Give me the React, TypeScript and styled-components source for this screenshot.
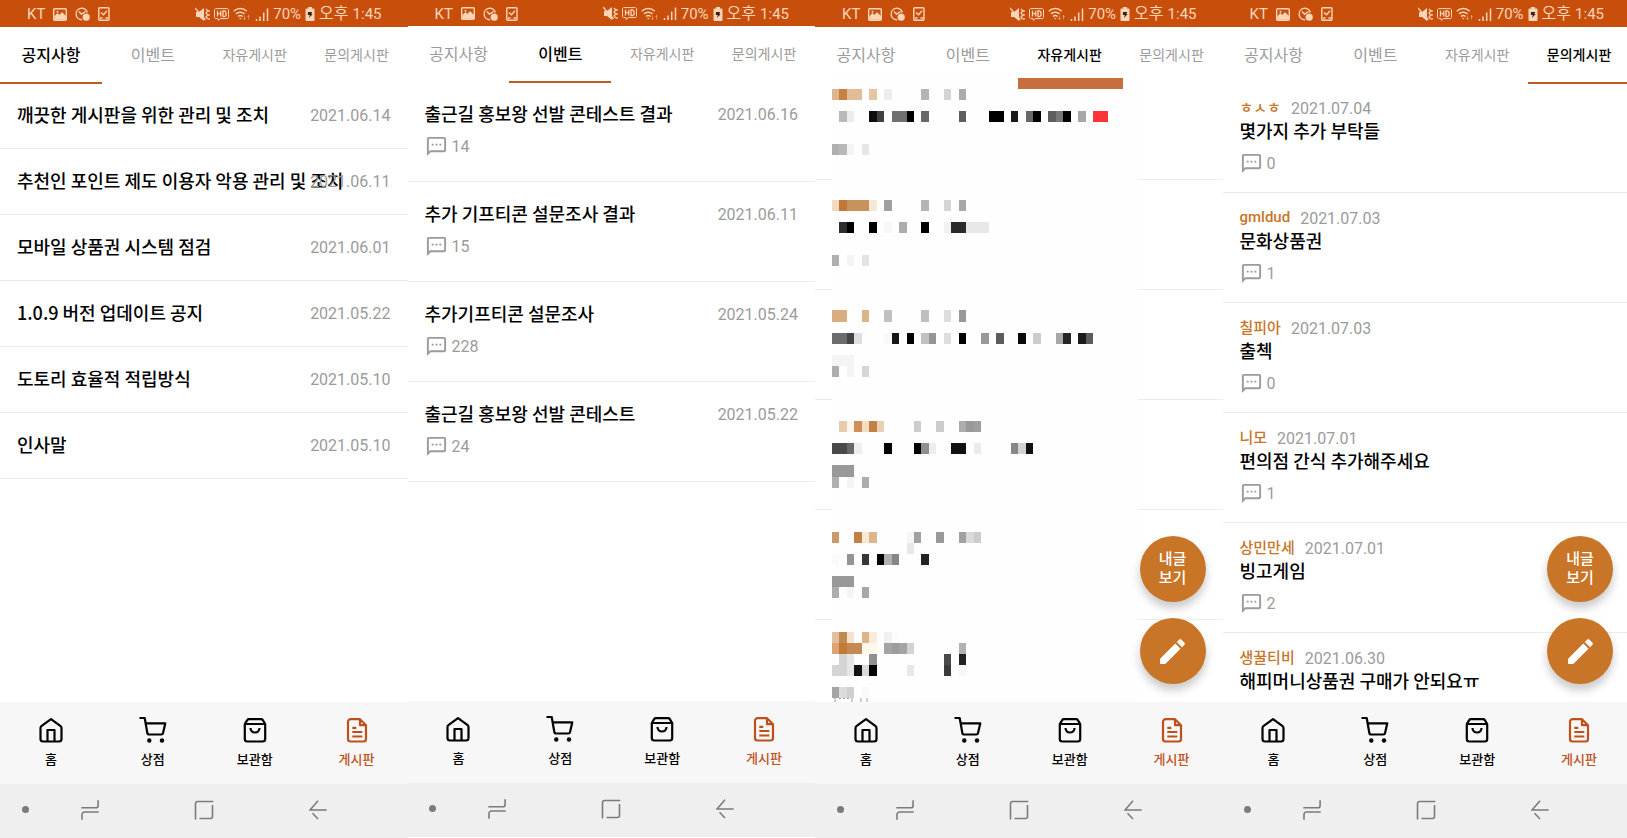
import React from "react";
import styled, { createGlobalStyle } from "styled-components";
import { MdEdit, MdOutlineSms } from "react-icons/md";

const GlobalStyle = createGlobalStyle`
  * { box-sizing: border-box; }
  html, body { margin: 0; padding: 0; background: #fff; overflow: hidden; }
  body { font-family: Roboto, "Noto Sans CJK KR", sans-serif; color: #000; }
  button { font: inherit; border: 0; background: none; padding: 0; margin: 0; cursor: pointer; }
  ul { list-style: none; margin: 0; padding: 0; }
  svg { display: block; flex: none; }
`;

const accent = "#c84e0b";
const ochre = "#c87528";
const grey = "#9b9b9b";

/* ---------- layout ---------- */

const Board = styled.main`
  display: grid;
  grid-template-columns: repeat(4, minmax(0, 1fr));
  width: calc(100% + 3px);
  height: 100vh;
`;

const Phone = styled.section<{ $raised?: boolean }>`
  position: relative;
  display: flex;
  flex-direction: column;
  min-height: 0;
  padding-bottom: ${(p) => (p.$raised ? 1 : 0)}px;
  background: #fff;
`;

const StatusBar = styled.header<{ $raised?: boolean }>`
  flex: none;
  display: flex;
  align-items: center;
  justify-content: space-between;
  height: ${(p) => (p.$raised ? 26 : 27)}px;
  padding: 1px 26px 0 27px;
  background: ${accent};
  color: #fcd5b8;
  font-size: 15px;
  line-height: 24px;
  white-space: nowrap;
`;

const StatusGroup = styled.div<{ $gap: number }>`
  display: flex;
  align-items: center;
  gap: ${(p) => p.$gap}px;
`;

const Meridiem = styled.span`
  font-size: 16px;
`;

const Tabs = styled.div`
  flex: none;
  display: grid;
  grid-template-columns: repeat(4, minmax(0, 1fr));
  height: 57px;
  margin-bottom: -1px;
`;

const Tab = styled.button<{ $active: boolean; $small?: boolean }>`
  display: flex;
  align-items: center;
  justify-content: center;
  padding-bottom: 2px;
  border-bottom: 2px solid ${(p) => (p.$active ? "#bf5a24" : "transparent")};
  color: ${(p) => (p.$active ? "#000" : grey)};
  font-size: ${(p) => (p.$small ? 14 : 16)}px;
  font-weight: ${(p) => (p.$active ? 500 : 400)};
  white-space: nowrap;
`;

const Body = styled.div`
  position: relative;
  flex: 1;
  min-height: 0;
  overflow: hidden;
`;

const NoticeRow = styled.li`
  display: flex;
  align-items: center;
  justify-content: space-between;
  height: 66px;
  padding: 0 17px;
  border-bottom: 1px solid #ececec;
`;

const EventRow = styled.li`
  display: flex;
  flex-direction: column;
  gap: 6px;
  height: 100px;
  padding: 19px 17px 0;
  border-bottom: 1px solid #ececec;
`;

const EventHead = styled.div`
  display: flex;
  align-items: center;
  justify-content: space-between;
`;

const PostRow = styled.li`
  height: 110px;
  padding: 16px 17px 0;
  border-bottom: 1px solid #ececec;
`;

const ScrolledList = styled.ul`
  margin-top: -13px;
`;

const Title = styled.span`
  flex: 1;
  min-width: 0;
  display: block;
  padding-bottom: 3px;
  font-family: "Noto Sans CJK KR", sans-serif;
  font-size: 18px;
  font-weight: 500;
  line-height: 24px;
  white-space: nowrap;
`;

const DateText = styled.time`
  position: relative;
  color: ${grey};
  font-size: 16px;
  line-height: 24px;
`;

const Byline = styled.div`
  display: flex;
  align-items: center;
  gap: 10px;
  height: 19px;
`;

const Author = styled.span`
  padding-bottom: 4px;
  color: ${ochre};
  font-size: 15px;
  font-weight: 500;
`;

const CommentLine = styled.div<{ $spaced?: boolean }>`
  display: flex;
  align-items: center;
  gap: 4px;
  height: 24px;
  margin-top: ${(p) => (p.$spaced ? 6 : 0)}px;
  color: ${grey};
  font-size: 16px;
`;

const FabStack = styled.div`
  position: absolute;
  z-index: 1;
  right: 17px;
  bottom: 18px;
  display: flex;
  flex-direction: column;
  gap: 16px;
`;

const Fab = styled.button`
  display: flex;
  align-items: center;
  justify-content: center;
  width: 66px;
  height: 66px;
  border-radius: 50%;
  background: ${ochre};
  color: #fff;
  font-size: 15px;
  font-weight: 500;
  line-height: 19px;
  box-shadow: 0 6px 10px rgba(0, 0, 0, 0.22);
`;

const BottomNav = styled.nav`
  position: relative;
  flex: none;
  display: grid;
  grid-template-columns: repeat(4, minmax(0, 1fr));
  height: 82px;
  background: #f7f7f7;
`;

const NavItem = styled.button<{ $active?: boolean }>`
  display: flex;
  flex-direction: column;
  align-items: center;
  gap: 6px;
  padding-top: 14px;
  color: ${(p) => (p.$active ? "#c0501b" : "#000")};
  font-size: 13px;
  font-weight: 500;
  line-height: 20px;
`;

const SystemBar = styled.footer`
  flex: none;
  display: grid;
  grid-template-columns: 8% repeat(3, 28%);
  align-items: center;
  height: 54px;
  padding-bottom: 3px;
  background: #efefef;
  color: #7b7b7b;
`;

const SystemKey = styled.button`
  display: flex;
  justify-content: center;
  color: inherit;
`;

const Dot = styled.span`
  justify-self: end;
  width: 7px;
  height: 7px;
  margin-right: 4px;
  border-radius: 50%;
  background: currentColor;
`;

const Mosaic = styled.svg`
  position: absolute;
  top: 78px;
  left: 17px;
  width: 75%;
  height: 624px;
`;

/* ---------- status icons ---------- */

const PictureIcon = () => (
  <svg width="14" height="13" viewBox="0 0 14 13" fill="none" stroke="currentColor" strokeWidth="1.4">
    <rect x=".7" y=".7" width="12.6" height="11.6" rx="1" />
    <path d="M2 11V8.500L4.500 6l2 2L9 5l3.500 3.500V11z" fill="currentColor" />
    <circle cx="4.500" cy="3.800" r="1" fill="currentColor" stroke="none" />
  </svg>
);

const ClockIcon = () => (
  <svg width="15" height="14" viewBox="0 0 15 14" fill="none" stroke="currentColor" strokeWidth="1.4">
    <path d="M12.3 5.5A5.7 5.7 0 1 0 7 12.7" />
    <path d="M3.8 4.5 6.5 7l4-2.5" />
    <circle cx="11.2" cy="10.2" r="3.6" fill="currentColor" stroke="none" />
  </svg>
);

const CheckDocIcon = () => (
  <svg width="12" height="14" viewBox="0 0 12 14" fill="none" stroke="currentColor" strokeWidth="1.4">
    <rect x=".8" y=".8" width="10.2" height="12.4" rx="1" />
    <path d="m3 5.500 2.500 2.300L9 3.800" />
    <path d="M2 11h2.500M7.500 11H10" />
  </svg>
);

const MuteIcon = () => (
  <svg width="15" height="15" viewBox="0 0 15 15" fill="none" stroke="currentColor">
    <path d="M1 5h3l5-4v13L4 10H1z" fill="currentColor" stroke="none" />
    <path d="m0 1 10.5 12" strokeWidth="1.3" />
    <path d="m11 2 1.8 2L11 6l1.8 2L11 10l1.8 2M14 3v2M14 7v2M14 11v2" strokeWidth="1.2" />
  </svg>
);

const HdIcon = () => (
  <svg width="15" height="13" viewBox="0 0 15 13" fill="none" stroke="currentColor" strokeWidth="1">
    <path d="M1.500 .6h12l1 1v8l-1 1H6L4.500 12.500 4 10.600H1.500l-1-1v-8z" />
    <path d="M3.500 2.800v5.800M6.800 2.800v5.800M3.500 5.600h3.300M9 2.800v5.800h1.700L12 7.200V4.200l-1.300-1.400z" strokeWidth="1.300" />
  </svg>
);

const WifiIcon = () => (
  <svg width="18" height="14" viewBox="0 0 18 14" fill="none" stroke="currentColor" strokeWidth="1.5">
    <path d="M.8 4.200a9.200 9.200 0 0 1 12.900 0M3 6.900a6.200 6.200 0 0 1 8.500 0M5 9.500a3.500 3.500 0 0 1 4.500 0" />
    <path d="M6 11h2.600L7.300 12.500z" fill="currentColor" stroke="none" />
    <path d="M11.500 8.500v4M10.300 11.300l1.200 1.200 1.200-1.200M15.500 12.500v-4M14.300 9.700l1.200-1.200 1.200 1.200" strokeWidth=".8" opacity=".6" />
  </svg>
);

const SignalIcon = () => (
  <svg width="14" height="13" viewBox="0 0 14 13" fill="none" stroke="currentColor" strokeWidth="1.500">
    <path d="M1.500 11v2M5 8.500V13M8.700 4.500V13M12.500 .5V13" />
  </svg>
);

const BatteryIcon = () => (
  <svg width="10" height="14" viewBox="0 0 10 14" fill="currentColor">
    <path d="M3 0h4v1.500h1.500a1 1 0 0 1 1 1V13a1 1 0 0 1-1 1h-7a1 1 0 0 1-1-1V2.500a1 1 0 0 1 1-1H3z" />
    <path d="M3 5h4.200L6.300 7h1.400L4 11l.8-3H2.800z" fill="#3a2010" />
  </svg>
);

/* ---------- navigation icons ---------- */

const NavSvg = styled.svg.attrs({ width: 28, height: 28, viewBox: "0 0 28 28" })`
  fill: none;
  stroke: currentColor;
  stroke-width: 2.2;
  stroke-linejoin: round;
`;

const HomeIcon = () => (
  <NavSvg>
    <path d="M14 3.200 23.300 9.800a2.800 2.800 0 0 1 1.200 2.200v11a2.500 2.500 0 0 1-2.500 2.500H6A2.500 2.500 0 0 1 3.500 23V12a2.800 2.800 0 0 1 1.200-2.200z" />
    <path d="M10.500 25.500V14h7v11.500" />
  </NavSvg>
);

const CartIcon = () => (
  <NavSvg>
    <path d="M.5 2h5.200l2.600 14.800a2 2 0 0 0 2 1.700h11.800a2 2 0 0 0 2-1.700L26.300 7.300H6.600" />
    <circle cx="10.300" cy="24.500" r="2.200" fill="currentColor" stroke="none" />
    <circle cx="23" cy="24.500" r="2.200" fill="currentColor" stroke="none" />
  </NavSvg>
);

const BagIcon = () => (
  <NavSvg>
    <path d="m3.800 8 2.400-3.900a2 2 0 0 1 1.700-.9h12.200a2 2 0 0 1 1.700.9L24.200 8v15a2.500 2.500 0 0 1-2.500 2.500H6.300A2.500 2.500 0 0 1 3.800 23zM3.800 8h20.400" />
    <path d="M9.500 12c0 6 9 6 9 0" />
  </NavSvg>
);

const BoardIcon = () => (
  <NavSvg>
    <path d="M17 3.200H7.500A2.500 2.500 0 0 0 5 5.700V23a2.500 2.500 0 0 0 2.500 2.500h13A2.500 2.500 0 0 0 23 23V9.200zV9.200h6" />
    <path d="M9.300 11.800h4M9.300 16h10M9.300 20.500h10" />
  </NavSvg>
);

const RecentsIcon = () => (
  <svg width="18" height="20" viewBox="0 0 18 20" fill="none" stroke="currentColor" strokeWidth="1.600">
    <path d="M.3 7.800h14.400a2.400 2.400 0 0 0 2.400-2.400V.3M1 19.700v-5.300A2.400 2.400 0 0 1 3.400 12h14.300" />
  </svg>
);

const HomeKeyIcon = () => (
  <svg width="20" height="20" viewBox="0 0 20 20" fill="none" stroke="currentColor" strokeWidth="1.600">
    <path d="M1.500 19.500V3.500a2 2 0 0 1 2-2h15.800M18.500 5v11.500a2 2 0 0 1-2 2H5.500" />
  </svg>
);

const BackIcon = () => (
  <svg width="18" height="20" viewBox="0 0 18 20" fill="none" stroke="currentColor" strokeWidth="1.600">
    <path d="M17.700 10H1L9 .8M3.500 13.200 9 19" />
  </svg>
);

/* ---------- data ---------- */

const tabNames = ["공지사항", "이벤트", "자유게시판", "문의게시판"];

const notices = [
  ["깨끗한 게시판을 위한 관리 및 조치", "2021.06.14"],
  ["추천인 포인트 제도 이용자 악용 관리 및 조치", "2021.06.11"],
  ["모바일 상품권 시스템 점검", "2021.06.01"],
  ["1.0.9 버전 업데이트 공지", "2021.05.22"],
  ["도토리 효율적 적립방식", "2021.05.10"],
  ["인사말", "2021.05.10"],
];

const events: [string, string, number][] = [
  ["출근길 홍보왕 선발 콘테스트 결과", "2021.06.16", 14],
  ["추가 기프티콘 설문조사 결과", "2021.06.11", 15],
  ["추가기프티콘 설문조사", "2021.05.24", 228],
  ["출근길 홍보왕 선발 콘테스트", "2021.05.22", 24],
];

const posts: [string, string, string, number?][] = [
  ["ㅎㅅㅎ", "2021.07.04", "몇가지 추가 부탁들", 0],
  ["gmldud", "2021.07.03", "문화상품권", 1],
  ["칠피아", "2021.07.03", "출첵", 0],
  ["니모", "2021.07.01", "편의점 간식 추가해주세요", 1],
  ["상민만세", "2021.07.01", "빙고게임", 2],
  ["생꿀티비", "2021.06.30", "해피머니상품권 구매가 안되요ㅠ"],
];

/* Each line of the censored feed: row number, then "column[+extra cells]:colour". */
const mosaicRows: [number, string][] = [
  [0, "25+13:c66e3e"],
  [1, "0:dfb58f 1:c8813f 2+1:e0bc98 5:e4c5a4 7:ededed 12:b4b4b4 15:d4d4d4 17:ababab"],
  [3, "1:b9b9b9 2:ececec 5:0d0d0d 6:404040 8+1:707070 10:000000 12:686868 17:5e5e5e 21+1:000000 24:1a1a1a 26:686868 27:000000 29:5e5e5e 30:777777 31:000000 33:a8a8a8 35+1:ff3438"],
  [6, "0:afafaf 1:b9b9b9 2:f4f4f4 4:e6e6e6"],
  [11, "0:f3d9bd 1:bf7837 2+2:c8925c 5:f5e6d6 7:a0a0a0 12:b4b4b4 15:d4d4d4 17:a8a8a8"],
  [13, "1:2d2d2d 2:000000 5:000000 7:f7f7f7 9:adadad 12:000000 15:f1f1f1 16+1:2b2b2b 18+2:e8e8e8"],
  [16, "0:afafaf 2:f4f4f4 4:e3e3e3"],
  [21, "0+1:d8ae80 4:dcb48a 7:c0c0c0 12:bfbfbf 15:dedede 17:999999"],
  [23, "0+1:6c6c6c 2:444444 3:dedede 7:f9f9f9 8:171717 10:000000 12:c0c0c0 13:959595 15:dedede 17:000000 20:999999 22:5c5c5c 25:0a0a0a 27:cccccc 30:a8a8a8 31:262626 33:1b1b1b 34:5c5c5c"],
  [25, "0+2:f4f4f4"],
  [26, "0:adadad 2:f4f4f4 4:d6d6d6"],
  [31, "1:e8cbad 2:fff5e8 3:cd8f55 4:f4dcc2 5:c08145 6:ebd0b3 11:cccccc 14:cccccc 17:acacac 18:999999 19:9e9e9e"],
  [33, "0+1:494949 2:686868 3:eeeeee 7:000000 11:000000 12:8f8f8f 13:ededed 16+1:111111 19:ebebeb 24:868686 25:d2d2d2 26:111111"],
  [35, "0+2:999999"],
  [36, "0:b0b0b0 2:f4f4f4 4:adadad"],
  [41, "0:cc9a69 3:c08145 4:fae8d3 5:dcb48d 10:f5f5f5 11:a0a0a0 14:999999 17:a0a0a0 18:dadada 19:cccccc"],
  [42, "10:e8e8e8"],
  [43, "0:fafafa 2:949494 4:363636 6:000000 7:b0b0b0 8:868686 12:222222"],
  [45, "0+2:999999"],
  [46, "0:adadad 2:f4f4f4 4:a8a8a8"],
  [50, "0:e0c09c 1:c08a50 2:f5e3ce 4:dfb488 5:fbecda 7:f1f1f1 8:fbfbfb"],
  [51, "0:daa474 1:c17a38 2+1:c38a51 4+1:fff8ea 7:a4a4a4 8:9c9c9c 9:a4a4a4 10:d2d2d2 17:b2b2b2"],
  [52, "1:d4d4d4 2:e6e6e6 5:909090 15:4a4a4a 17:222222"],
  [53, "0+1:d4d4d4 2:e6e6e6 3:111111 4:dadada 5:000000 10:e8e8e8 15:3b3b3b 17:f7f7f7"],
  [55, "0:a4a4a4 1:dcdcdc 2:d0d0d0 4:f9f9f9"],
];

const cellWidth = 7.457;
const cellHeight = 11.07;

const mosaicCells = mosaicRows.flatMap(([row, line]) =>
  line.split(" ").map((item) => {
    const [place, colour] = item.split(":");
    const [column, extra] = place.split("+").map(Number);
    const x = Math.round(column * cellWidth);
    const y = Math.round(row * cellHeight);
    return {
      x,
      y,
      width: Math.round((column + 1 + (extra || 0)) * cellWidth) - x,
      height: Math.round((row + 1) * cellHeight) - y,
      fill: "#" + colour,
    };
  })
);

/* ---------- parts ---------- */

const CensoredFeed = () => (
  <Mosaic viewBox="0 0 306 624" preserveAspectRatio="none" shapeRendering="crispEdges" aria-hidden="true">
    <rect width="306" height="624" fill="#fefefe" />
    {mosaicCells.map((cell, i) => (
      <rect key={i} {...cell} />
    ))}
    <path d="M3 620v4M20 620v4M29 620v4M35 620v4" stroke="#9b9b9b" strokeWidth="1" />
    <path d="M7 620.500h2M11 620.500h2M15 620.500h2" stroke="#9b9b9b" strokeWidth="1" />
  </Mosaic>
);

const Comments = ({ count, spaced }: { count: number; spaced?: boolean }) => (
  <CommentLine $spaced={spaced}>
    <MdOutlineSms size={23} />
    {count}
  </CommentLine>
);

const WriteButtons = () => (
  <FabStack>
    <Fab type="button">
      내글
      <br />
      보기
    </Fab>
    <Fab type="button" aria-label="글쓰기">
      <MdEdit size={33} />
    </Fab>
  </FabStack>
);

type ScreenProps = { active: number; raised?: boolean; overlay?: React.ReactNode; children: React.ReactNode };

const Screen = ({ active, raised, overlay, children }: ScreenProps) => (
  <Phone $raised={raised}>
    <StatusBar $raised={raised}>
      <StatusGroup $gap={8}>
        <span>KT</span>
        <PictureIcon />
        <ClockIcon />
        <CheckDocIcon />
      </StatusGroup>
      <StatusGroup $gap={4}>
        <MuteIcon />
        <HdIcon />
        <WifiIcon />
        <SignalIcon />
        <span>70%</span>
        <BatteryIcon />
        <Meridiem>오후</Meridiem>
        <span>1:45</span>
      </StatusGroup>
    </StatusBar>
    <Tabs role="tablist">
      {tabNames.map((name, i) => (
        <Tab key={name} type="button" role="tab" aria-selected={i === active} $active={i === active} $small={i > 1}>
          {name}
        </Tab>
      ))}
    </Tabs>
    <Body>{children}</Body>
    {overlay}
    <BottomNav>
      <NavItem type="button"><HomeIcon />홈</NavItem>
      <NavItem type="button"><CartIcon />상점</NavItem>
      <NavItem type="button"><BagIcon />보관함</NavItem>
      <NavItem type="button" $active><BoardIcon />게시판</NavItem>
    </BottomNav>
    <SystemBar>
      <Dot />
      <SystemKey type="button" aria-label="최근 앱"><RecentsIcon /></SystemKey>
      <SystemKey type="button" aria-label="홈 화면"><HomeKeyIcon /></SystemKey>
      <SystemKey type="button" aria-label="뒤로"><BackIcon /></SystemKey>
    </SystemBar>
  </Phone>
);

export default function App() {
  return (
    <>
      <GlobalStyle />
      <Board>
        <Screen active={0}>
          <ul>
            {notices.map(([title, date]) => (
              <NoticeRow key={title}>
                <Title>{title}</Title>
                <DateText>{date}</DateText>
              </NoticeRow>
            ))}
          </ul>
        </Screen>

        <Screen active={1} raised>
          <ul>
            {events.map(([title, date, count]) => (
              <EventRow key={title}>
                <EventHead>
                  <Title>{title}</Title>
                  <DateText>{date}</DateText>
                </EventHead>
                <Comments count={count} />
              </EventRow>
            ))}
          </ul>
        </Screen>

        <Screen active={2} overlay={<CensoredFeed />}>
          <ScrolledList>
            {[1, 2, 3, 4, 5].map((n) => (
              <PostRow key={n} />
            ))}
          </ScrolledList>
          <WriteButtons />
        </Screen>

        <Screen active={3}>
          <ul>
            {posts.map(([author, date, title, count]) => (
              <PostRow key={title}>
                <Byline>
                  <Author>{author}</Author>
                  <DateText>{date}</DateText>
                </Byline>
                <Title>{title}</Title>
                {count !== undefined && <Comments count={count} spaced />}
              </PostRow>
            ))}
          </ul>
          <WriteButtons />
        </Screen>
      </Board>
    </>
  );
}
